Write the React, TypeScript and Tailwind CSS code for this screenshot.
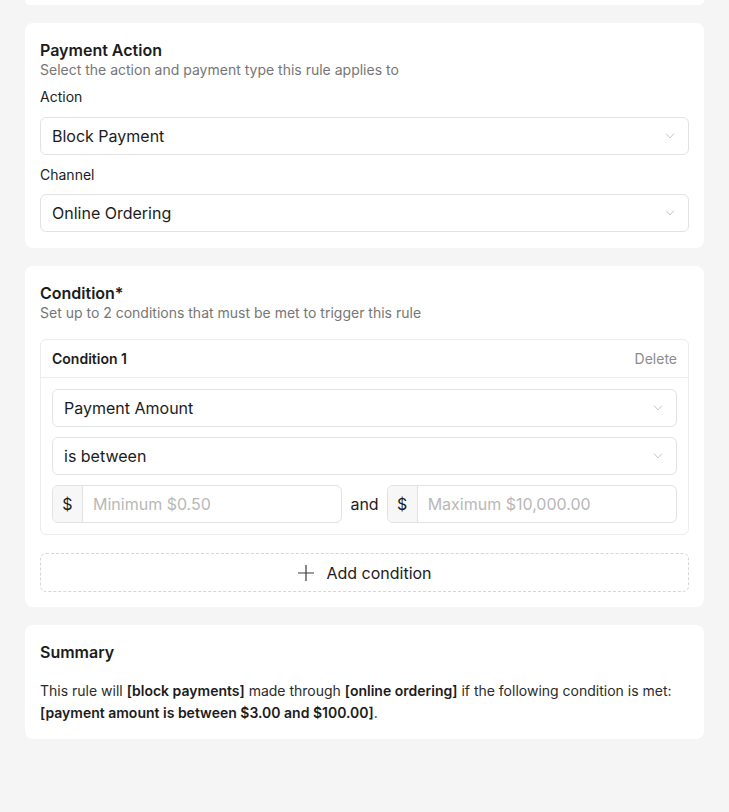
import React from "react";

function Chevron() {
  return (
    <svg width="10" height="6" viewBox="0 0 10 6" fill="none" className="shrink-0">
      <path d="M1.5 1l3.5 4 3.5-4" stroke="#c4c4c4" strokeWidth="1" strokeLinecap="round" strokeLinejoin="round" />
    </svg>
  );
}

function Select({ value }: { value: string }) {
  return (
    <div className="flex h-[38px] items-center justify-between rounded-md border border-[#e2e2e2] bg-white pl-[11px] pr-[13px]">
      <span className="text-[16px] text-[#1c1c1c]">{value}</span>
      <Chevron />
    </div>
  );
}

function MoneyInput({ placeholder }: { placeholder: string }) {
  return (
    <div className="flex h-[38px] flex-1 items-stretch overflow-hidden rounded-md border border-[#e2e2e2] bg-white">
      <div className="flex w-[30px] items-center justify-center border-r border-[#e2e2e2] bg-[#f7f7f7] text-[16px] text-[#1c1c1c]">$</div>
      <div className="flex items-center pl-[10px] text-[16px] text-[#b8b8b8]">{placeholder}</div>
    </div>
  );
}

export default function App() {
  return (
    <div
      className="min-h-[812px] bg-[#f5f5f5] px-[25px] pb-[40px]"
      style={{ fontFamily: "Inter, 'Noto Sans', sans-serif" }}
    >
      <div className="flex flex-col gap-[18px]">
        <div className="h-[5px] rounded-b-lg bg-white" />

        {/* Payment Action */}
        <div className="rounded-lg bg-white px-[15px] pt-[16px] pb-[16px]">
          <div className="text-[16px] font-semibold leading-[22px] text-[#1c1c1c]">Payment Action</div>
          <div className="text-[14px] leading-[18px] text-[#767676]">Select the action and payment type this rule applies to</div>
          <div className="mt-[8px] text-[14px] leading-[20px] text-[#1c1c1c]">Action</div>
          <div className="mt-[10px]">
            <Select value="Block Payment" />
          </div>
          <div className="mt-[10px] text-[14px] leading-[20px] text-[#1c1c1c]">Channel</div>
          <div className="mt-[9px]">
            <Select value="Online Ordering" />
          </div>
        </div>

        {/* Condition */}
        <div className="rounded-lg bg-white px-[15px] pt-[16px] pb-[15px]">
          <div className="text-[16px] font-semibold leading-[22px] text-[#1c1c1c]">Condition*</div>
          <div className="text-[14px] leading-[18px] text-[#767676]">Set up to 2 conditions that must be met to trigger this rule</div>
          <div className="mt-[17px] rounded-md border border-[#ededed]">
            <div className="flex h-[38px] items-center justify-between border-b border-[#ededed] px-[11px]">
              <span className="text-[14px] font-semibold text-[#1c1c1c]">Condition 1</span>
              <span className="text-[14px] text-[#8c8c8c]">Delete</span>
            </div>
            <div className="flex flex-col gap-[10px] px-[11px] pt-[11px] pb-[11px]">
              <Select value="Payment Amount" />
              <Select value="is between" />
              <div className="flex items-center gap-[8px]">
                <MoneyInput placeholder="Minimum $0.50" />
                <span className="text-[16px] text-[#1c1c1c]">and</span>
                <MoneyInput placeholder="Maximum $10,000.00" />
              </div>
            </div>
          </div>
          <div className="mt-[18px] flex h-[39px] items-center justify-center gap-[11px] rounded-md border border-dashed border-[#d6d6d6]">
            <svg width="18" height="18" viewBox="0 0 18 18" fill="none">
              <path d="M9 1v16M1 9h16" stroke="#3a3a3a" strokeWidth="1.2" />
            </svg>
            <span className="text-[16px] text-[#1c1c1c]">Add condition</span>
          </div>
        </div>

        {/* Summary */}
        <div className="rounded-lg bg-white px-[15px] pt-[16px] pb-[15px]">
          <div className="text-[16px] font-semibold leading-[22px] text-[#1c1c1c]">Summary</div>
          <p className="mt-[17px] text-[14px] leading-[22px] text-[#2b2b2b]">
            This rule will <span className="font-semibold text-[#1c1c1c]">[block payments]</span> made through{" "}
            <span className="font-semibold text-[#1c1c1c]">[online ordering]</span> if the following condition is met:{" "}
            <span className="font-semibold text-[#1c1c1c]">[payment amount is between $3.00 and $100.00]</span>.
          </p>
        </div>
      </div>
    </div>
  );
}
